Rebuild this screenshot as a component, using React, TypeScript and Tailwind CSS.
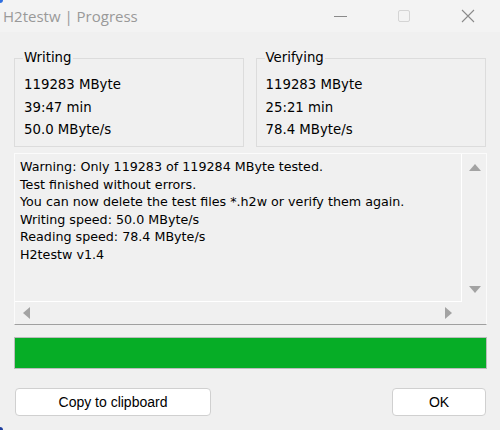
import React from 'react';

const FONT = { fontFamily: '"Liberation Sans", Arial, sans-serif' };
const TAHOMA = { fontFamily: '"DejaVu Sans", Verdana, sans-serif' };

const LOG_LINES = [
  'Warning: Only 119283 of 119284 MByte tested.',
  'Test finished without errors.',
  'You can now delete the test files *.h2w or verify them again.',
  'Writing speed: 50.0 MByte/s',
  'Reading speed: 78.4 MByte/s',
  'H2testw v1.4',
];

function GroupBox({ title, lines, className }: { title: string; lines: string[]; className: string }) {
  return (
    <fieldset className={`border border-[#dcdcdc] h-[97px] px-[9px] ${className}`} style={TAHOMA}>
      <legend className="px-[1px] ml-[-1px] text-[13.3px] leading-[16px] text-black">{title}</legend>
      <div className="flex flex-col gap-[6px] pt-[11px] text-[13.3px] leading-[16.5px] text-black">
        {lines.map((l) => (
          <span key={l}>{l}</span>
        ))}
      </div>
    </fieldset>
  );
}

function Arrow({ dir }: { dir: 'up' | 'down' | 'left' | 'right' }) {
  const pts = {
    up: '0,8 6,1 12,8',
    down: '0,1 6,8 12,1',
    left: '8,0 1,6 8,12',
    right: '1,0 8,6 1,12',
  }[dir];
  const vert = dir === 'up' || dir === 'down';
  return (
    <svg width={vert ? 12 : 9} height={vert ? 9 : 12} viewBox={vert ? '0 0 12 9' : '0 0 9 12'}>
      <polygon points={pts} fill="#a3a3a3" />
    </svg>
  );
}

export default function App() {
  return (
    <div className="relative w-[500px] h-[430px] bg-[#f0f0f0] overflow-hidden" style={FONT}>
      <div className="absolute left-0 top-0 w-[3px] h-[3px] rounded-br-[3px] bg-[#2f6fe0]" />
      <div className="absolute left-0 bottom-0 w-[3px] h-[3px] rounded-tr-[3px] bg-[#1f3f9f]" />

      {/* title bar */}
      <div className="flex items-center h-[32px] bg-[#f3f3f3]">
        <span className="pl-[3px] pt-[1px] text-[15px] text-[#999999]" style={{ fontFamily: '"Open Sans", "Liberation Sans", sans-serif' }}>
          H2testw | Progress
        </span>
        <div className="ml-auto flex items-center h-full">
          <div className="w-[64px] h-full flex items-center justify-center">
            <div className="w-[13px] h-[1px] bg-[#8a8a8a]" />
          </div>
          <div className="w-[64px] h-full flex items-center justify-center">
            <div className="w-[12px] h-[12px] border border-[#d4d4d4] rounded-[2px]" />
          </div>
          <div className="w-[64px] h-full flex items-center justify-center pr-[1px]">
            <svg width="14" height="14" viewBox="0 0 14 14">
              <path d="M1 1 L13 13 M13 1 L1 13" stroke="#8a8a8a" strokeWidth="1.1" />
            </svg>
          </div>
        </div>
      </div>

      <div className="px-[14px] pt-[18px]">
        {/* group boxes */}
        <div className="flex gap-[12px]">
          <GroupBox className="w-[230px]" title="Writing" lines={['119283 MByte', '39:47 min', '50.0 MByte/s']} />
          <GroupBox className="w-[231px]" title="Verifying" lines={['119283 MByte', '25:21 min', '78.4 MByte/s']} />
        </div>

        {/* log box */}
        <div className="mt-[6px] w-[473px] h-[172px] border border-[#fbfbfb] border-b-[#a0a0a0] flex flex-col">
          <div className="flex flex-1 min-h-0">
            <div
              className="flex-1 border-r border-b border-[#ffffff] pl-[5px] pt-[4px] text-[12.7px] leading-[17.6px] text-black whitespace-nowrap overflow-hidden"
              style={TAHOMA}
            >
              {LOG_LINES.map((l) => (
                <div key={l}>{l}</div>
              ))}
            </div>
            <div className="w-[24px] flex flex-col items-center justify-between pt-[9px] pb-[8px] pl-[1px]">
              <Arrow dir="up" />
              <Arrow dir="down" />
            </div>
          </div>
          <div className="h-[22px] flex items-center justify-between pl-[7px] pr-[33px]">
            <Arrow dir="left" />
            <Arrow dir="right" />
          </div>
        </div>

        {/* progress */}
        <div className="mt-[12px] w-[473px] h-[32px] border border-[#bcbcbc] bg-[#e6e6e6]">
          <div className="h-full w-full bg-[#06ad26]" />
        </div>

        {/* buttons */}
        <div className="mt-[19px] flex justify-between pl-[1px]">
          <button className="w-[196px] h-[28px] bg-white border border-[#d0d0d0] rounded-[4px] text-[14px] text-black">
            Copy to clipboard
          </button>
          <button className="w-[94px] h-[28px] bg-white border border-[#d0d0d0] rounded-[4px] text-[14px] text-black">
            OK
          </button>
        </div>
      </div>
    </div>
  );
}
